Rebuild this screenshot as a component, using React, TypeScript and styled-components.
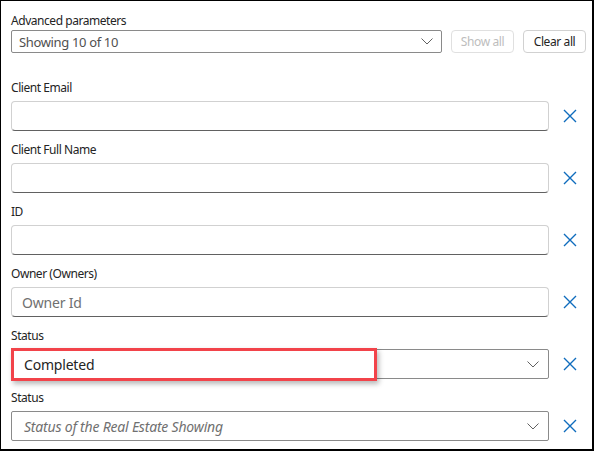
import React from "react";
import styled, { createGlobalStyle } from "styled-components";

const Global = createGlobalStyle`
  html, body { margin: 0; padding: 0; background: #ffffff; }
  body { font-family: "Segoe UI", "Noto Sans", "Open Sans", sans-serif; color: #242424; }
  * { box-sizing: border-box; }
`;

const Frame = styled.div`
  position: relative;
  width: 594px;
  height: 451px;
  background: #ffffff;
  border-style: solid;
  border-color: #000000;
  border-width: 1px 2px 2px 1px;
  padding: 12px 2px 0 10px;
  display: flex;
  flex-direction: column;
`;

const Label = styled.div`
  font-size: 12px;
  line-height: 16px;
  height: 16px;
  letter-spacing: -0.45px;
  color: #242424;
  white-space: nowrap;
`;

const TopBar = styled.div`
  display: flex;
  align-items: center;
  gap: 9px;
  margin-top: 1px;
  margin-bottom: 27px;
`;

const TopSelect = styled.div`
  width: 431px;
  height: 23px;
  border: 1px solid #8a8a8a;
  border-radius: 2px;
  display: flex;
  align-items: center;
  justify-content: space-between;
  padding: 0 8px 0 7px;
  font-size: 13px;
  letter-spacing: -0.35px;
  color: #505050;
`;

const Btn = styled.button<{ $disabled?: boolean; $w: number }>`
  width: ${(p) => p.$w}px;
  height: 23px;
  padding: 0;
  border-radius: 4px;
  background: #ffffff;
  border: 1px solid ${(p) => (p.$disabled ? "#e0e0e0" : "#d1d1d1")};
  color: ${(p) => (p.$disabled ? "#bdbdbd" : "#242424")};
  font-family: inherit;
  font-size: 12px;
  letter-spacing: -0.4px;
  cursor: ${(p) => (p.$disabled ? "default" : "pointer")};
`;

const Fields = styled.div`
  display: flex;
  flex-direction: column;
  gap: 11px;
`;

const Field = styled.div`
  display: flex;
  flex-direction: column;
  gap: 5px;
`;

const FieldRow = styled.div`
  display: flex;
  align-items: center;
`;

const TextInput = styled.div`
  flex: 0 0 538px;
  height: 30px;
  border: 1px solid #d1d1d1;
  border-bottom-color: #616161;
  border-radius: 4px;
  display: flex;
  align-items: center;
  padding: 0 10px;
  font-size: 14px;
  letter-spacing: -0.2px;
  color: #707070;
`;

const SelectBox = styled.div<{ $placeholder?: boolean }>`
  flex: 0 0 538px;
  height: 30px;
  border: 1px solid #8a8a8a;
  border-radius: 2px;
  display: flex;
  align-items: center;
  justify-content: space-between;
  padding: 0 9px 0 12px;
  font-size: 14px;
  letter-spacing: -0.2px;
  font-style: ${(p) => (p.$placeholder ? "italic" : "normal")};
  color: ${(p) => (p.$placeholder ? "#707070" : "#242424")};
`;

const RemoveBtn = styled.button`
  flex: 0 0 41px;
  height: 30px;
  padding: 0;
  border: none;
  background: transparent;
  display: flex;
  align-items: center;
  justify-content: center;
  cursor: pointer;
`;

const Highlight = styled.div`
  position: absolute;
  left: 10px;
  top: 347px;
  width: 366px;
  height: 33px;
  border: 3px solid #f2434a;
  box-shadow: 2px 3px 5px rgba(0, 0, 0, 0.28);
  pointer-events: none;
`;

const Chevron = () => (
  <svg width="12" height="7" viewBox="0 0 12 7" fill="none">
    <polyline points="0.5,0.5 6,6 11.5,0.5" stroke="#616161" strokeWidth="1" />
  </svg>
);

const Cross = () => (
  <svg width="14" height="14" viewBox="0 0 14 14" fill="none">
    <path d="M1 1 L13 13 M13 1 L1 13" stroke="#0f6cbd" strokeWidth="1.4" />
  </svg>
);

type FieldDef =
  | { label: string; kind: "text"; placeholder?: string }
  | { label: string; kind: "select"; value?: string; placeholder?: string };

const fields: FieldDef[] = [
  { label: "Client Email", kind: "text" },
  { label: "Client Full Name", kind: "text" },
  { label: "ID", kind: "text" },
  { label: "Owner (Owners)", kind: "text", placeholder: "Owner Id" },
  { label: "Status", kind: "select", value: "Completed" },
  { label: "Status", kind: "select", placeholder: "Status of the Real Estate Showing" },
];

export default function App() {
  return (
    <>
      <Global />
      <Frame>
        <Label>Advanced parameters</Label>
        <TopBar>
          <TopSelect>
            <span>Showing 10 of 10</span>
            <Chevron />
          </TopSelect>
          <Btn $disabled $w={63}>Show all</Btn>
          <Btn $w={63}>Clear all</Btn>
        </TopBar>
        <Fields>
          {fields.map((f, i) => (
            <Field key={i}>
              <Label>{f.label}</Label>
              <FieldRow>
                {f.kind === "text" ? (
                  <TextInput>{f.placeholder ?? ""}</TextInput>
                ) : (
                  <SelectBox $placeholder={!f.value}>
                    <span>{f.value ?? f.placeholder}</span>
                    <Chevron />
                  </SelectBox>
                )}
                <RemoveBtn aria-label="Remove">
                  <Cross />
                </RemoveBtn>
              </FieldRow>
            </Field>
          ))}
        </Fields>
        <Highlight />
      </Frame>
    </>
  );
}
